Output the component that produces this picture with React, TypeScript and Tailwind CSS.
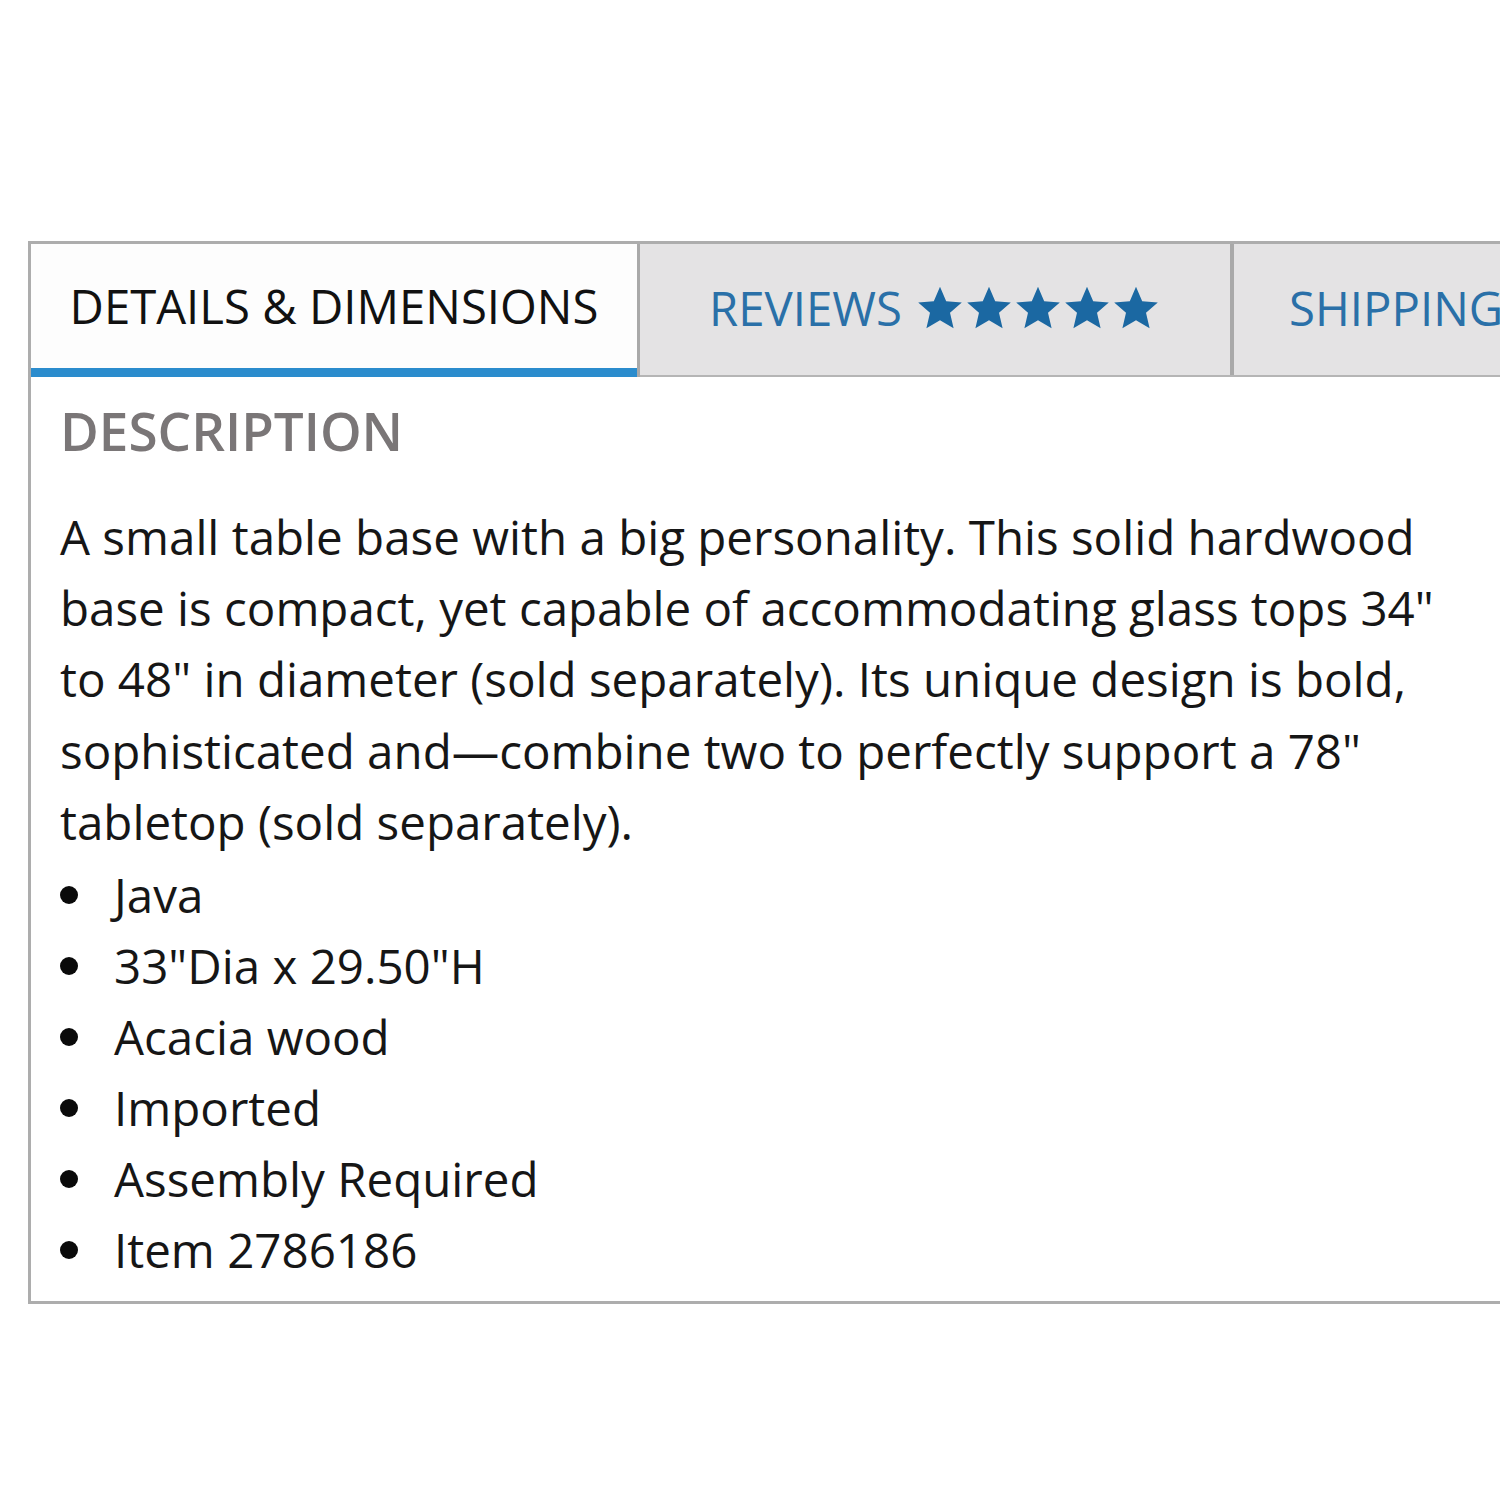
const Star = () => (
  <svg viewBox="0 0 24 24" className="w-[50px] h-[48px] -mx-[0.5px]" fill="#1b68a2">
    <path d="M12 1.4l3.1 7.2 7.8.7-5.9 5.1 1.8 7.7L12 18.1l-6.8 4 1.8-7.7-5.9-5.1 7.8-.7z" />
  </svg>
);

const bullets = ['Java', '33"Dia x 29.50"H', "Acacia wood", "Imported", "Assembly Required", "Item 2786186"];

export default function App() {
  return (
    <div className="w-[1500px] h-[1500px] overflow-hidden bg-white font-['Open_Sans',sans-serif]">
      <div className="ml-[28px] mt-[241px] w-[1600px] border-[3px] border-[#adadad]">
        {/* tabs */}
        <div className="flex h-[133px]">
          <div className="w-[606px] shrink-0 flex items-center justify-center bg-[#fdfdfd] border-b-[9px] border-[#2b8ccd] text-[47.3px] text-[#111] leading-none whitespace-nowrap">
            DETAILS &amp; DIMENSIONS
          </div>
          <div className="w-[3px] shrink-0 bg-[#a9a9a9]" />
          <div className="w-[590px] shrink-0 flex items-center justify-center gap-[14px] bg-[#e4e3e4] border-b-[2px] border-[#b5b5b5] text-[47.3px] text-[#2a70a8] leading-none pb-[4px] whitespace-nowrap">
            <span>REVIEWS</span>
            <span className="flex">
              <Star />
              <Star />
              <Star />
              <Star />
              <Star />
            </span>
          </div>
          <div className="w-[4px] shrink-0 bg-[#a9a9a9] border-b-[2px] border-[#b5b5b5]" />
          <div className="flex-1 min-w-0 flex items-center pl-[55px] bg-[#e4e3e4] border-b-[2px] border-[#b5b5b5] text-[47.3px] text-[#2a70a8] leading-none pb-[4px] whitespace-nowrap overflow-hidden">
            SHIPPING &amp; RETURNS
          </div>
        </div>

        {/* body */}
        <div className="pl-[29px] pt-[14px] pb-[16px] text-[#161616]">
          <h2 className="text-[53px] font-semibold text-[#7a7677] leading-[80px]">DESCRIPTION</h2>
          <p className="mt-[30px] text-[47.5px] leading-[71.2px]">
            A small table base with a big personality. This solid hardwood
            <br />
            base is compact, yet capable of accommodating glass tops 34"
            <br />
            to 48" in diameter (sold separately). Its unique design is bold,
            <br />
            sophisticated and—combine two to perfectly support a 78"
            <br />
            tabletop (sold separately).
          </p>
          <ul className="mt-[2px] text-[47.5px] leading-[71px]">
            {bullets.map((b) => (
              <li key={b} className="flex items-center">
                <span className="w-[18px] h-[18px] rounded-full bg-[#0a0a0a] mr-[36px]" />
                <span>{b}</span>
              </li>
            ))}
          </ul>
        </div>
      </div>
    </div>
  );
}
